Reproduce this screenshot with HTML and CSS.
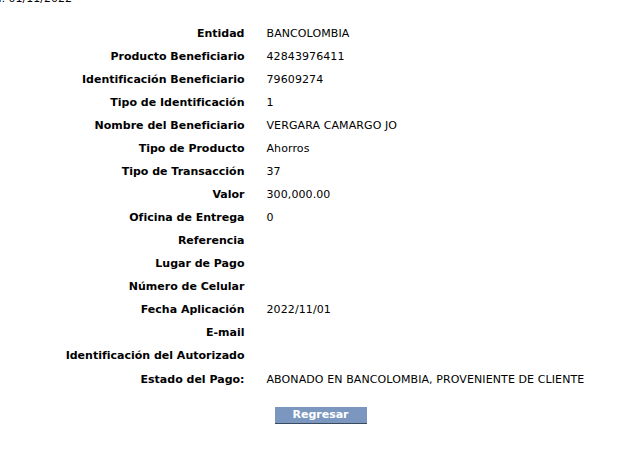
FILE: index.html
```html
<!DOCTYPE html>
<html lang="es">
<head>
<meta charset="utf-8">
<title>Detalle del Pago</title>
<link rel="stylesheet" href="styles.css">
</head>
<body>
<div class="topline"><span>Fecha: 01/11/2022</span></div>
<div class="detail">
  <div class="lbl">Entidad</div><div class="val">BANCOLOMBIA</div>
  <div class="lbl">Producto Beneficiario</div><div class="val">42843976411</div>
  <div class="lbl">Identificación Beneficiario</div><div class="val">79609274</div>
  <div class="lbl">Tipo de Identificación</div><div class="val">1</div>
  <div class="lbl">Nombre del Beneficiario</div><div class="val">VERGARA CAMARGO JO</div>
  <div class="lbl">Tipo de Producto</div><div class="val">Ahorros</div>
  <div class="lbl">Tipo de Transacción</div><div class="val">37</div>
  <div class="lbl">Valor</div><div class="val">300,000.00</div>
  <div class="lbl">Oficina de Entrega</div><div class="val">0</div>
  <div class="lbl">Referencia</div><div class="val"></div>
  <div class="lbl">Lugar de Pago</div><div class="val"></div>
  <div class="lbl">Número de Celular</div><div class="val"></div>
  <div class="lbl">Fecha Aplicación</div><div class="val">2022/11/01</div>
  <div class="lbl">E-mail</div><div class="val"></div>
  <div class="lbl">Identificación del Autorizado</div><div class="val"></div>
  <div class="lbl">Estado del Pago:</div><div class="val">ABONADO EN BANCOLOMBIA, PROVENIENTE DE CLIENTE</div>
</div>
<div class="actions"><button class="btn" type="button">Regresar</button></div>
</body>
</html>
```
FILE: styles.css
```css
html, body {
  margin: 0;
  padding: 0;
  background: #ffffff;
}
body {
  font-family: "DejaVu Sans", sans-serif;
  font-size: 11px;
  color: #000000;
}
.topline {
  display: flex;
  justify-content: flex-end;
  width: 72px;
  height: 14px;
  margin-top: -8px;
  white-space: nowrap;
  line-height: 14px;
}
.detail {
  display: grid;
  grid-template-columns: auto auto;
  justify-content: center;
  column-gap: 22px;
  grid-auto-rows: 23px;
  margin-top: 16px;
  padding-left: 9px;
  line-height: 23px;
}
.lbl {
  font-weight: bold;
  text-align: right;
  white-space: nowrap;
}
.val {
  white-space: nowrap;
  letter-spacing: 0.1px;
}
.detail .lbl:nth-last-child(2),
.detail .val:last-child {
  margin-top: 1px;
}
.actions {
  display: flex;
  justify-content: center;
  margin-top: 17px;
}
.btn {
  width: 92px;
  height: 17px;
  padding: 0;
  border: 0;
  border-bottom: 1px solid #3c4a5e;
  background: #7b97c0;
  color: #ffffff;
  font-family: "DejaVu Sans", sans-serif;
  font-weight: bold;
  font-size: 11px;
  line-height: 16px;
}
```
